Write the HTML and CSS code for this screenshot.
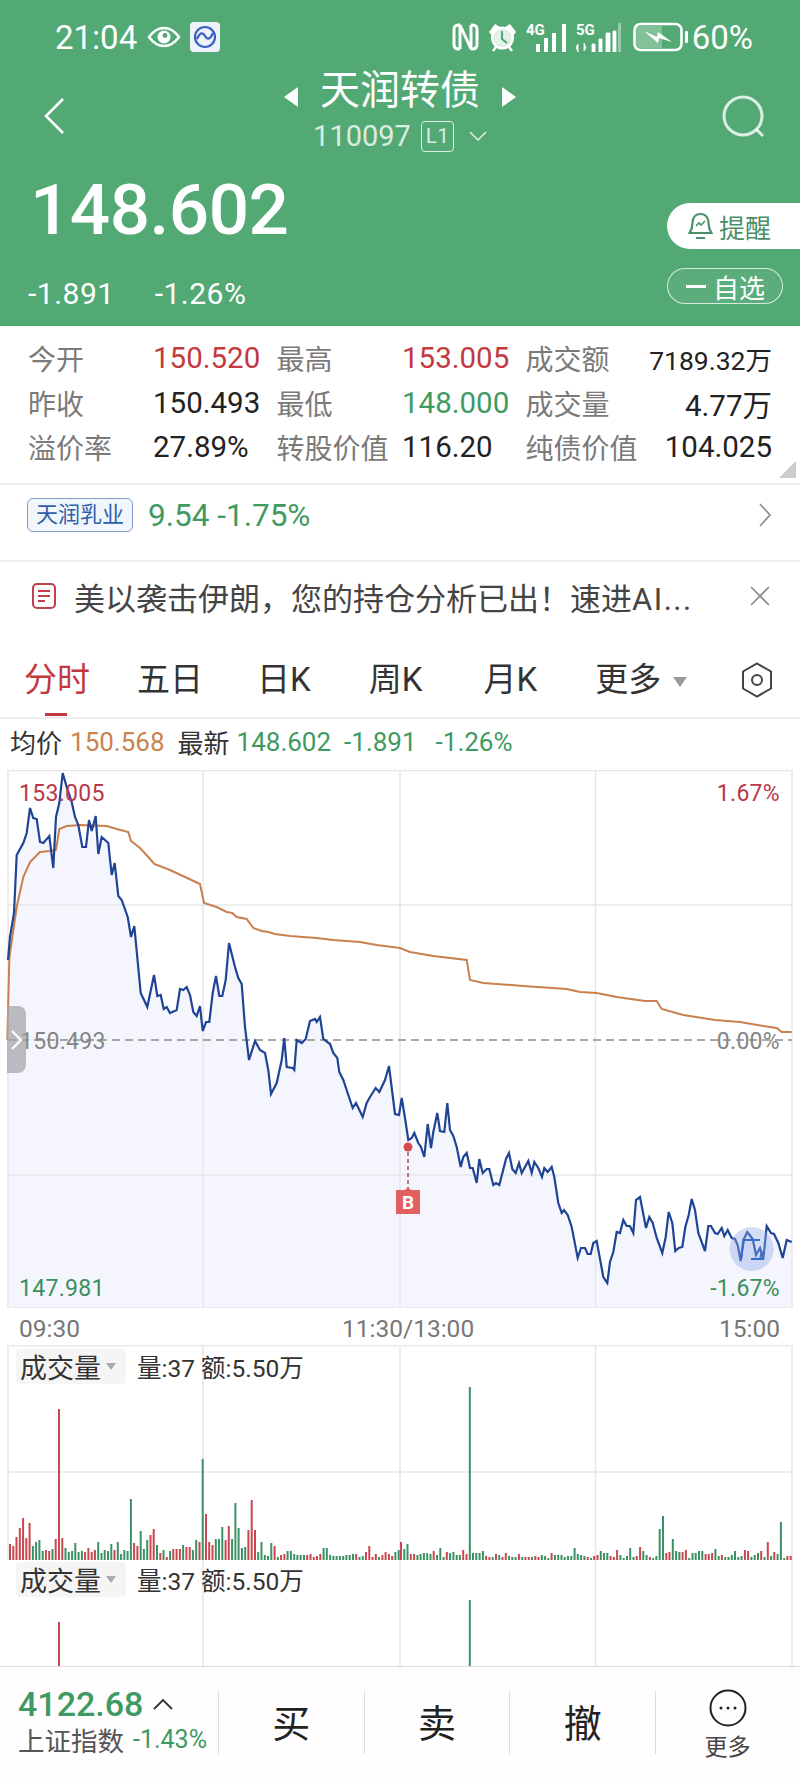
FILE: index.html
```html
<!DOCTYPE html>
<html lang="zh">

<head>
    <meta charset="utf-8">
    <title>天润转债</title>
    <link rel="stylesheet" href="styles.css">
</head>

<body>
    <header class="top">
        <div class="status">
            <span class="clock">21:04</span>
            <svg class="ic-eye" width="34" height="22" viewBox="0 0 34 22"><path d="M2 11C7 4 12 2 17 2s10 2 15 9c-5 7-10 9-15 9S7 18 2 11z" fill="none" stroke="#fff" stroke-width="2.500"/><circle cx="17" cy="11" r="6.500" fill="#fff"/><circle cx="18" cy="9.500" r="2.400" fill="#53a974"/></svg>
            <svg class="ic-app" width="30" height="30" viewBox="0 0 30 30"><rect width="30" height="30" rx="4" fill="#eef3fb"/><circle cx="15" cy="15" r="10" fill="none" stroke="#3a62bd" stroke-width="2.200"/><path d="M7 17c3-7 6-7 8-3s5 4 8-3" fill="none" stroke="#3a62bd" stroke-width="2.200"/></svg>
            <span class="status-gap"></span>
            <svg width="27" height="28" viewBox="0 0 27 28"><path d="M8 2H6.500Q2 2 2 6.500v15Q2 26 6.500 26H8M19 2h1.500Q25 2 25 6.500v15q0 4.500-4.500 4.500H19M8 26V2l11 24V2" fill="none" stroke="#fff" stroke-width="3"/></svg>
            <svg class="ic-alarm" width="29" height="30" viewBox="0 0 29 30"><path d="M1 10l6-8 5 3-8 9zM28 10l-6-8-5 3 8 9z" fill="#fff"/><circle cx="14.500" cy="16" r="10" fill="none" stroke="#fff" stroke-width="3"/><circle cx="14.500" cy="16" r="8.500" fill="rgba(255,255,255,.85)"/><path d="M14 9v8l5 4" fill="none" stroke="#53a974" stroke-width="2.200"/><path d="M5 29l3-4M24 29l-3-4" stroke="#fff" stroke-width="2.500"/></svg>
            <svg class="ic-sig" width="42" height="30" viewBox="0 0 42 30"><text x="0" y="13" class="sig-text">4G</text><path d="M10 30v-8h4v8zM18 30v-14h4v14zM26 30v-19h4v19zM36 30v-28h4v28z" fill="#fff"/></svg>
            <svg class="ic-sig5" width="46" height="30" viewBox="0 0 46 30"><text x="0" y="13" class="sig-text">5G</text><path d="M2 30v-8l-2 3zM8 21v8l2-3zM16 30v-8h3v8zM23 30v-13h3v13zM30 30v-19h4v19zM37 30V9h3v21z" fill="#fff" stroke="#fff" stroke-width=".8"/><path d="M42 30V1h3v29z" fill="#fff" opacity=".4"/></svg>
            <svg class="ic-batt" width="56" height="30" viewBox="0 0 56 30"><rect x="1.500" y="2" width="47" height="26" rx="6" fill="none" stroke="#fff" stroke-width="2.600"/><path d="M3 8q0-4 4-4h22v22H7q-4 0-4-4z" fill="rgba(255,255,255,.28)"/><path d="M11 9l13 6 1-5 14 10-13-4-1 5z" fill="#fff"/><rect x="52" y="9" width="3" height="12" rx="1" fill="#fff"/></svg>
            <span class="batt-num">60%</span>
        </div>

        <div class="nav">
            <svg class="nav-back" width="22" height="36" viewBox="0 0 22 36"><path d="M20 1L3 18l17 17" fill="none" stroke="#fff" stroke-width="2.600"/></svg>
            <div class="nav-mid">
                <div class="nav-title">
                    <i class="arrow-l"></i>
                    <span>天润转债</span>
                    <i class="arrow-r"></i>
                </div>
                <div class="nav-code">
                    <span>110097</span>
                    <span class="l1">L1</span>
                    <svg class="nav-chev" width="18" height="10" viewBox="0 0 18 10"><path d="M1 1l8 8 8-8" fill="none" stroke="rgba(255,255,255,.8)" stroke-width="1.500"/></svg>
                </div>
            </div>
            <svg class="nav-search" width="46" height="46" viewBox="0 0 46 46"><circle cx="22" cy="21" r="19" fill="none" stroke="rgba(255,255,255,.8)" stroke-width="3"/><path d="M35 34l7 7" stroke="rgba(255,255,255,.8)" stroke-width="3"/></svg>
        </div>

        <div class="quote">
            <div>
                <div class="price">148.602</div>
                <div class="change">
                    <span>-1.891</span>
                    <span>-1.26%</span>
                </div>
            </div>
            <div class="quote-btns">
                <div class="btn-remind">
                    <svg width="25" height="28" viewBox="0 0 25 28"><path d="M12.500 2C7 2 4.500 6 4.500 11c0 4-1 7-3 10h22c-2-3-3-6-3-10 0-5-2.500-9-8-9zM8 26h9" fill="none" stroke="#4a8f68" stroke-width="2.200"/><path d="M8 14l3-3 2 2 4-4" fill="none" stroke="#4a8f68" stroke-width="1.600"/></svg>
                    <span>提醒</span>
                </div>
                <div class="btn-fav"><span class="dash"></span>自选</div>
            </div>
        </div>
    </header>

    <section class="stats">
        <span class="lbl">今开</span><span class="red">150.520</span>
        <span class="lbl">最高</span><span class="red">153.005</span>
        <span class="lbl">成交额</span><span class="end small">7189.32万</span>
        <span class="lbl">昨收</span><span>150.493</span>
        <span class="lbl">最低</span><span class="green">148.000</span>
        <span class="lbl">成交量</span><span class="end">4.77万</span>
        <span class="lbl">溢价率</span><span>27.89%</span>
        <span class="lbl">转股价值</span><span>116.20</span>
        <span class="lbl">纯债价值</span><span class="end">104.025</span>
    </section>

    <section class="stock">
        <span class="stock-tag">天润乳业</span>
        <span class="stock-val">9.54 -1.75%</span>
        <svg width="14" height="24" viewBox="0 0 14 24"><path d="M2 1l10 11L2 23" fill="none" stroke="#888" stroke-width="1.600"/></svg>
    </section>

    <section class="notice">
        <svg width="24" height="26" viewBox="0 0 24 26"><rect x="1" y="1" width="22" height="24" rx="4" fill="none" stroke="#c0404a" stroke-width="2"/><path d="M6 8h12M6 13h12M6 18h7" stroke="#c0404a" stroke-width="2"/></svg>
        <span class="notice-text">美以袭击伊朗，您的持仓分析已出！速进<span class="notice-end">AI...</span></span>
        <svg width="20" height="20" viewBox="0 0 20 20"><path d="M1 1l18 18M19 1L1 19" stroke="#888" stroke-width="1.600"/></svg>
    </section>

    <nav class="tabs">
        <span class="tab on">分时</span>
        <span class="tab t2">五日</span>
        <span class="tab t3">日K</span>
        <span class="tab t4">周K</span>
        <span class="tab t5">月K</span>
        <span class="tab t6">更多<i class="tab-caret"></i></span>
        <svg class="tab-set" width="32" height="36" viewBox="0 0 32 36"><path d="M16 1.500l14 8v17l-14 8-14-8v-17z" fill="none" stroke="#444" stroke-width="2"/><circle cx="16" cy="18" r="5" fill="none" stroke="#444" stroke-width="2"/></svg>
    </nav>

    <div class="avg">
        <span>均价</span><span class="orange">150.568</span>
        <span class="a2">最新</span><span class="green a-p">148.602</span>
        <span class="green a-c">-1.891</span><span class="green a-r">-1.26%</span>
    </div>

    <div class="chart">
        <svg class="chart-svg" width="800" height="538" viewBox="0 770 800 538">
            <polygon class="area" points="8,1308 8,960 10,937 14,913 16.700,855 23.300,843 26.700,833 30,808 33.300,818 36.700,819 40,842 43.300,843 49.300,836 53.300,868 56,817 59.300,803 62.700,773 66.700,787 71.700,802 75,817 78.300,825 82.300,847 86,847 89,820 91.700,831 95.700,816 98.300,854 101.700,837 108.300,843 111.700,875 114.700,863 118.300,896 121.700,900 127.700,917 131,937 134.300,926 140.700,993 147.300,1007 154,975 157.300,996 160.700,995 163.700,1009 166.700,1007 170,1013 176.700,1010 180,989 183.300,990 186.700,987 190,995 193.300,1012 196.700,1016 200,1006 202.700,1031 206,1022 209.300,1022 212.700,993 216,976 219.300,996 222.300,996 225.700,980 229,943 235,967 238.300,978 241.700,984 245,1027 249,1060 255,1041 260,1050 265,1053 268.300,1070 271,1094 276.700,1083 281.700,1060 284.300,1038 286.700,1067 292.700,1068 294.300,1070 296.700,1040 301.700,1043 305.700,1039 310,1021 315,1019 316.700,1022 320,1017 323.300,1039 330,1044 333.300,1053 337.300,1058 339.300,1072 343.300,1080 352.700,1108 356,1103 362.700,1117 366.700,1103 370,1097 375.700,1088 379.300,1092 385,1080 389,1066 395,1114 399,1115 401.700,1098 405,1118 408.300,1140 411.700,1138 414.300,1133 418.300,1143 421,1147 424.300,1157 427.700,1124 431,1148 433.300,1132 437.300,1113 440,1131 444.300,1132 447.300,1103 450,1130 453.300,1136 456.700,1147 460.700,1167 463.300,1157 466.700,1153 470,1168 472.700,1168 476.700,1183 479.300,1159 482.700,1173 486.700,1169 489.300,1169 493.300,1185 496,1183 499.300,1185 506,1159 509,1153 512.300,1169 515.700,1173 519,1163 521.700,1173 528.300,1161 531.700,1173 534.300,1162 538.300,1168 542,1177 544.300,1168 547.700,1172 551.700,1167 554.300,1177 558.300,1203 561.700,1213 564,1210 567.700,1215 571.700,1227 577.700,1258 581,1248 585,1248 587.700,1254 590.700,1254 593.300,1243 596.700,1241 603.300,1277 607.300,1283 610,1262 613.300,1252 616.700,1232 620,1233 623.300,1220 626.700,1226 630,1226 633.300,1233 636,1200 640,1197 646,1228 649.300,1217 652.700,1223 656.700,1238 662.300,1253 665.700,1237 668.700,1212 672.300,1223 675.300,1251 678.700,1248 682.300,1247 685.300,1227 688.700,1215 691.700,1199 695,1210 698.300,1233 705,1251 708.300,1226 711,1226 715,1233 717.700,1234 721.700,1228 724.300,1236 727.700,1230 731.700,1238 735,1239 737.700,1245 740.700,1261 743.300,1240 747.300,1232 752.700,1239 756,1255 760,1248 763.300,1259 766.700,1226 771,1233 774,1234 778.300,1243 782.700,1258 786.700,1240 791.700,1242 791.700,1308"/>
            <path class="grid" d="M8 770.500H792V1308H8zM203 770V1308M400 770V1308M595.500 770V1308M8 905H792M8 1175H792"/>
            <path class="dash-line" d="M8 1040H792"/>
            <polyline class="line-avg" points="7.300,1040 9.300,960 10,953 16.700,907 23.300,877 30,862 40,852 50,851 56,850 59.300,829 66.700,826 80,825 106.700,826 116.700,829 128.300,832 131,841 140,848 148.300,857 154.300,864 170,870 185,877 200,884 204,903 216.700,907 226.700,912 232.300,913 236.700,917 246.700,919 253.300,928 261.700,931 268.300,932 275,934 290,936 316.700,938 333.300,940 360,942 376.700,945 400,948 410,952 433.300,956 466.700,960 470,980 483.300,983 523.300,986 566.700,989 580,992 596.700,993 616.700,997 645,1001 656.700,1001 661.700,1009 683.300,1015 715,1020 740,1022 763.300,1026 776.700,1028 781.700,1032 791.700,1032"/>
            <polyline class="line-price" points="8,960 10,937 14,913 16.700,855 23.300,843 26.700,833 30,808 33.300,818 36.700,819 40,842 43.300,843 49.300,836 53.300,868 56,817 59.300,803 62.700,773 66.700,787 71.700,802 75,817 78.300,825 82.300,847 86,847 89,820 91.700,831 95.700,816 98.300,854 101.700,837 108.300,843 111.700,875 114.700,863 118.300,896 121.700,900 127.700,917 131,937 134.300,926 140.700,993 147.300,1007 154,975 157.300,996 160.700,995 163.700,1009 166.700,1007 170,1013 176.700,1010 180,989 183.300,990 186.700,987 190,995 193.300,1012 196.700,1016 200,1006 202.700,1031 206,1022 209.300,1022 212.700,993 216,976 219.300,996 222.300,996 225.700,980 229,943 235,967 238.300,978 241.700,984 245,1027 249,1060 255,1041 260,1050 265,1053 268.300,1070 271,1094 276.700,1083 281.700,1060 284.300,1038 286.700,1067 292.700,1068 294.300,1070 296.700,1040 301.700,1043 305.700,1039 310,1021 315,1019 316.700,1022 320,1017 323.300,1039 330,1044 333.300,1053 337.300,1058 339.300,1072 343.300,1080 352.700,1108 356,1103 362.700,1117 366.700,1103 370,1097 375.700,1088 379.300,1092 385,1080 389,1066 395,1114 399,1115 401.700,1098 405,1118 408.300,1140 411.700,1138 414.300,1133 418.300,1143 421,1147 424.300,1157 427.700,1124 431,1148 433.300,1132 437.300,1113 440,1131 444.300,1132 447.300,1103 450,1130 453.300,1136 456.700,1147 460.700,1167 463.300,1157 466.700,1153 470,1168 472.700,1168 476.700,1183 479.300,1159 482.700,1173 486.700,1169 489.300,1169 493.300,1185 496,1183 499.300,1185 506,1159 509,1153 512.300,1169 515.700,1173 519,1163 521.700,1173 528.300,1161 531.700,1173 534.300,1162 538.300,1168 542,1177 544.300,1168 547.700,1172 551.700,1167 554.300,1177 558.300,1203 561.700,1213 564,1210 567.700,1215 571.700,1227 577.700,1258 581,1248 585,1248 587.700,1254 590.700,1254 593.300,1243 596.700,1241 603.300,1277 607.300,1283 610,1262 613.300,1252 616.700,1232 620,1233 623.300,1220 626.700,1226 630,1226 633.300,1233 636,1200 640,1197 646,1228 649.300,1217 652.700,1223 656.700,1238 662.300,1253 665.700,1237 668.700,1212 672.300,1223 675.300,1251 678.700,1248 682.300,1247 685.300,1227 688.700,1215 691.700,1199 695,1210 698.300,1233 705,1251 708.300,1226 711,1226 715,1233 717.700,1234 721.700,1228 724.300,1236 727.700,1230 731.700,1238 735,1239 737.700,1245 740.700,1261 743.300,1240 747.300,1232 752.700,1239 756,1255 760,1248 763.300,1259 766.700,1226 771,1233 774,1234 778.300,1243 782.700,1258 786.700,1240 791.700,1242"/>
            <circle class="pulse" cx="751.700" cy="1249" r="22"/>
            <path class="pulse-line" d="M741 1260l3-20h16M751 1259h13M760 1259l2-8"/>
            <text class="ax red-t" x="19" y="801">153.005</text>
            <text class="ax red-t" x="780" y="801" text-anchor="end">1.67%</text>
            <text class="ax gray-t" x="20" y="1049">150.493</text>
            <text class="ax gray-t" x="780" y="1049" text-anchor="end">0.00%</text>
            <text class="ax green-t" x="19" y="1296">147.981</text>
            <text class="ax green-t" x="780" y="1296" text-anchor="end">-1.67%</text>
            <circle class="b-dot" cx="408" cy="1147" r="4.500"/>
            <path class="b-stem" d="M408 1152V1188"/>
            <path class="b-flag" d="M396 1190h9l3-3 3 3h9v24h-24z"/>
            <text class="b-text" x="408" y="1209" text-anchor="middle">B</text>
        </svg>
        <div class="handle">
            <svg width="12" height="20" viewBox="0 0 12 20"><path d="M1 1l9 9-9 9" fill="none" stroke="#fff" stroke-width="2.200"/></svg>
        </div>
    </div>

    <div class="times">
        <span>09:30</span>
        <span class="time-mid">11:30/13:00</span>
        <span class="time-end">15:00</span>
    </div>

    <div class="vol vol-a">
        <svg class="vol-svg" width="800" height="215" viewBox="0 1345 800 215" data-base="1560">
            <path class="grid" d="M8 1345.500H792M8 1345V1560M203 1345V1560M400 1345V1560M595.500 1345V1560M792 1345V1560M8 1472H792"/>
            <path class="bars-r"/>
            <path class="bars-g"/>
        </svg>
        <div class="vol-head">
            <span class="chip">成交量<i class="chip-caret"></i></span>
            <span class="vol-info">量:37 额:5.50万</span>
        </div>
    </div>

    <div class="vol vol-b">
        <svg class="vol-svg" width="800" height="106" viewBox="0 1560 800 106" data-base="1773">
            <path class="grid" d="M203 1560V1666M400 1560V1666M595.500 1560V1666M792 1560V1666"/>
            <path class="bars-r"/>
            <path class="bars-g"/>
        </svg>
        <div class="vol-head">
            <span class="chip">成交量<i class="chip-caret"></i></span>
            <span class="vol-info">量:37 额:5.50万</span>
        </div>
    </div>

    <footer class="foot">
        <div class="index">
            <div class="index-top">
                <span class="index-num">4122.68</span>
                <svg width="20" height="12" viewBox="0 0 20 12"><path d="M1 11l9-9 9 9" fill="none" stroke="#333" stroke-width="1.800"/></svg>
            </div>
            <div class="index-bot">
                <span>上证指数</span>
                <span class="green index-pct">-1.43%</span>
            </div>
        </div>
        <div class="act">买</div>
        <div class="act">卖</div>
        <div class="act">撤</div>
        <div class="act act-more">
            <svg width="38" height="38" viewBox="0 0 38 38"><circle cx="19" cy="19" r="17.500" fill="none" stroke="#222" stroke-width="2"/><circle cx="12" cy="19" r="1.500" fill="#222"/><circle cx="19" cy="19" r="1.500" fill="#222"/><circle cx="26" cy="19" r="1.500" fill="#222"/></svg>
            <span>更多</span>
        </div>
    </footer>

    <script src="chart.js"></script>
</body>

</html>
```

FILE: styles.css
```css
* {
    margin: 0;
    box-sizing: border-box;
}

body {
    width: 800px;
    height: 1778px;
    overflow: hidden;
    background-color: white;
    color: #222;
    font-family: Roboto, "Noto Sans CJK SC", sans-serif;
}

i {
    display: inline-block;
}

/* header */
.top {
    height: 326px;
    padding-top: 20px;
    background-color: #53a974;
    color: white;
}

.status {
    display: flex;
    align-items: center;
    height: 34px;
    padding: 0 47px 0 55px;
}

.clock {
    font-size: 33px;
    width: 92px;
}

.ic-app {
    margin-left: 9px;
}

.status-gap {
    flex: 1;
}

.ic-alarm {
    margin-left: 9px;
}

.ic-sig {
    margin-left: 9px;
}

.ic-sig5 {
    margin-left: 8px;
}

.sig-text {
    font-size: 15px;
    font-weight: 700;
    fill: white;
}

.ic-batt {
    margin-left: 11px;
}

.batt-num {
    font-size: 33px;
    margin-left: 3px;
}

.nav {
    display: grid;
    grid-template-columns: 1fr auto 1fr;
    align-items: center;
    padding: 19px 33px 0;
}

.nav-search {
    justify-self: end;
    margin-top: 10px;
}

.nav-back {
    margin: 6px 0 0 10px;
}

.nav-title {
    display: flex;
    align-items: center;
    justify-content: center;
    gap: 22px;
    font-size: 40px;
    line-height: 36px;
}

.arrow-l {
    border-right: 14px solid white;
    border-top: 10px solid transparent;
    border-bottom: 10px solid transparent;
    margin-top: 12px;
}

.arrow-r {
    border-left: 14px solid white;
    border-top: 10px solid transparent;
    border-bottom: 10px solid transparent;
    margin-top: 12px;
}

.nav-code {
    display: flex;
    align-items: center;
    justify-content: center;
    gap: 10px;
    margin-top: 10px;
    height: 34px;
    font-size: 29px;
    color: rgba(255, 255, 255, 0.8);
}

.nav-chev {
    margin-left: 5px;
}

.l1 {
    border: 1.5px solid rgba(255, 255, 255, 0.8);
    border-radius: 4px;
    font-size: 21px;
    line-height: 29px;
    width: 33px;
    text-align: center;
}

.quote {
    display: flex;
    justify-content: space-between;
}

.price {
    font-size: 71px;
    font-weight: 500;
    letter-spacing: -0.5px;
    line-height: 54px;
    padding: 30px 0 0 30px;
    height: 84px;
}

.change {
    display: flex;
    gap: 40px;
    margin-top: 39px;
    padding-left: 28px;
    font-size: 30px;
    letter-spacing: 0.5px;
    line-height: 36px;
}

.quote-btns {
    display: flex;
    flex-direction: column;
    align-items: flex-end;
    width: 133px;
    padding-top: 50px;
}

.btn-remind {
    display: flex;
    align-items: center;
    gap: 6px;
    width: 133px;
    height: 46px;
    padding-left: 21px;
    background-color: white;
    border-radius: 23px 0 0 23px;
    color: #4a8f68;
    font-size: 26px;
}

.btn-fav {
    display: flex;
    align-items: center;
    width: 116px;
    height: 36px;
    margin: 19px 17px 0 0;
    padding-left: 18px;
    border: 1.5px solid rgba(255, 255, 255, 0.75);
    border-radius: 18px;
    background-color: rgba(255, 255, 255, 0.05);
    font-size: 26px;
}

.dash {
    width: 20px;
    height: 3px;
    margin-right: 7px;
    background-color: white;
}

/* stats */
.stats {
    position: relative;
    display: grid;
    grid-template-columns: 125px 123.5px 125.5px 123.5px 1fr auto;
    grid-auto-rows: 44.5px;
    align-items: center;
    height: 157px;
    padding: 10px 28px 0 28px;
    font-size: 29.5px;
    color: #222;
}

.stats::after {
    content: "";
    position: absolute;
    right: 4px;
    bottom: 5px;
    border-left: 17px solid transparent;
    border-bottom: 17px solid #ccc;
}

.lbl {
    font-size: 28px;
    color: #7a7a7a;
}

.end {
    text-align: right;
}

.small {
    font-size: 26.5px;
}

.red {
    color: #c23a3f;
}

.green {
    color: #3f9a62;
}

.orange {
    color: #c8834f;
}

/* stock + notice */
.stock {
    display: flex;
    align-items: center;
    height: 77px;
    padding: 0 28px 15px 27px;
    border-top: 2px solid #eee;
}

.stock-tag {
    width: 106px;
    height: 34px;
    border: 1px solid #7d9cc9;
    border-radius: 6px;
    background-color: #f1f6fc;
    color: #2f5fa8;
    font-size: 22px;
    line-height: 32px;
    text-align: center;
}

.stock-val {
    flex: 1;
    margin-left: 15px;
    color: #3f9a62;
    font-size: 31.5px;
}

.notice {
    display: flex;
    align-items: center;
    height: 72px;
    padding: 0 30px 2px 32px;
    border-top: 2px solid #eee;
}

.notice-text {
    flex: 1;
    margin-left: 18px;
    color: #444;
    font-size: 31px;
    white-space: nowrap;
}

.notice-end {
    letter-spacing: 1.5px;
}

/* tabs */
.tabs {
    position: relative;
    display: flex;
    align-items: center;
    height: 87px;
    padding: 11px 27px 0 24px;
    border-bottom: 2px solid #eee;
    font-size: 33px;
    color: #333;
}

.tab {
    line-height: 40px;
}

.tab.on {
    position: relative;
    color: #c23a3f;
}

.tab.on::after {
    content: "";
    position: absolute;
    left: 21px;
    bottom: -16px;
    width: 22px;
    height: 3px;
    background-color: #c23a3f;
}

.t2 {
    margin-left: 47px;
}

.t3 {
    margin-left: 54px;
}

.t4 {
    margin-left: 58px;
}

.t5 {
    margin-left: 61px;
}

.t6 {
    margin-left: 58px;
}

.tab-caret {
    margin-left: 12px;
    vertical-align: middle;
    border-top: 10px solid #999;
    border-left: 7px solid transparent;
    border-right: 7px solid transparent;
}

.tab-set {
    margin-left: auto;
}

/* avg row */
.avg {
    display: flex;
    align-items: center;
    height: 51px;
    padding: 0 0 6px 10px;
    font-size: 26px;
    color: #333;
}

.avg .orange {
    margin-left: 8px;
}

.avg .a2 {
    margin-left: 13px;
}

.avg .a-p {
    margin-left: 7px;
}

.avg .a-c {
    margin-left: 13px;
}

.avg .a-r {
    margin-left: 19px;
}

/* charts */
.chart {
    position: relative;
    height: 538px;
}

.chart-svg,
.vol-svg {
    display: block;
}

.area {
    fill: #f5f6fd;
}

.grid {
    fill: none;
    stroke: #e6e6ea;
    stroke-width: 1.5;
}

.dash-line {
    stroke: #8b8b8b;
    stroke-width: 1.5;
    stroke-dasharray: 8 5;
}

.line-avg {
    fill: none;
    stroke: #c97f4e;
    stroke-width: 2;
}

.line-price {
    fill: none;
    stroke: #1f4496;
    stroke-width: 2.2;
}

.pulse {
    fill: #8fabe8;
    opacity: 0.4;
}

.pulse-line {
    fill: none;
    stroke: #3a6bd0;
    stroke-width: 1.8;
}

.ax {
    font-size: 23px;
    letter-spacing: 0.3px;
}

.red-t {
    fill: #b8394a;
}

.gray-t {
    fill: #858585;
}

.green-t {
    fill: #3a8f5c;
}

.b-dot {
    fill: #d84a4a;
}

.b-stem {
    stroke: #a84a5e;
    stroke-width: 1.5;
    stroke-dasharray: 4 3;
}

.b-flag {
    fill: #e26060;
}

.b-text {
    fill: white;
    font-size: 19px;
    font-weight: 700;
}

.handle {
    position: absolute;
    left: 7px;
    top: 236px;
    display: flex;
    align-items: center;
    justify-content: center;
    width: 19px;
    height: 67px;
    background-color: rgba(165, 165, 172, 0.75);
    border-radius: 0 8px 8px 0;
}

.times {
    display: flex;
    align-items: center;
    height: 37px;
    padding: 3px 20px 0 19px;
    font-size: 24.5px;
    color: #777;
}

.time-mid {
    margin-left: 262px;
}

.time-end {
    margin-left: auto;
}

.vol {
    position: relative;
}

.vol-a {
    height: 215px;
}

.vol-b {
    height: 106px;
    overflow: hidden;
}

.bars-r,
.bars-g {
    fill: none;
    stroke-width: 2;
}

.bars-r {
    stroke: #c9474e;
}

.bars-g {
    stroke: #3c9164;
}

.vol-head {
    position: absolute;
    left: 16px;
    top: 4px;
    display: flex;
    align-items: center;
    gap: 11px;
}

.vol-b .vol-head {
    top: 2px;
}

.chip {
    display: flex;
    align-items: center;
    width: 110px;
    height: 35px;
    padding-left: 4px;
    background-color: #f6f5f5;
    border-radius: 4px;
    font-size: 27px;
    color: #333;
}

.chip-caret {
    margin-left: 5px;
    border-top: 7px solid #aaa;
    border-left: 5px solid transparent;
    border-right: 5px solid transparent;
}

.vol-info {
    font-size: 24.5px;
    color: #333;
}

/* footer */
.foot {
    display: flex;
    align-items: center;
    height: 112px;
    border-top: 1.5px solid #ddd;
    background-color: #fffdfe;
}

.index {
    width: 218px;
    padding-left: 18px;
}

.index-top {
    display: flex;
    align-items: center;
    gap: 10px;
    height: 36px;
}

.index-num {
    font-size: 34px;
    font-weight: 500;
    color: #3f9a62;
}

.index-bot {
    display: flex;
    align-items: center;
    font-size: 26.5px;
    color: #555;
    margin-top: -2px;
}

.index-pct {
    margin-left: 9px;
    font-size: 25px;
}

.act {
    display: flex;
    align-items: center;
    justify-content: center;
    width: 145.7px;
    height: 63px;
    padding-bottom: 4px;
    border-left: 1.5px solid #ddd;
    font-size: 38px;
    color: #222;
}

.act-more {
    flex-direction: column;
    justify-content: flex-start;
    gap: 8px;
    width: 144px;
    padding-bottom: 0;
}

.act-more svg {
    flex: none;
    margin-top: -2px;
}

.act-more span {
    font-size: 23px;
    line-height: 26px;
    color: #444;
}
```

FILE: chart.js
```js
// volume bars, read off the chart: r = red, g = green, number = height
var leftBars = 'r16 r14 r23 r32 r42 r22 r37 g14 g18 g20 g9 r10 r9 g11 r21 r151 r22 g12 g8 g9 g17 g8 g9 r8 r12 r8 r10 g18 g7 g10 g9 g16 r10 g18 g6 g10 g9 g61 r17 r14 g29 g11 g20 r25 r31 g15 r7 g10 r3 g9 r11 r11 r11 g15 r13 r13 g10 g20 r18 g101 r46 r18 r15 g21 g21 g33 r20 r34 g21 g57 g32 g12 g13 r30 r60 r30 g8 g18 g5 g4 g17 r14 g3 r5 r6 g9 g9 g6 g5 g5 g5 r5 r6 r3 r4 r6 g12 g12 g5 g4 g4 g4 g4 g5 g5 g6 r6 g3 g4 r8 r14 r3 r6 g3 r5 r8 r6 r4 g8 g10';
var rightBars = 'r18 g11 g16 r6 r6 g5 g6 g7 g7 g6 r9 g5 g12 g3 r8 g7 g8 g5 g5 r10 r6 g173 g7 g7 g7 g9 r4 r3 g3 r6 g5 r3 r7 g4 g3 g3 r6 g3 r3 r3 g3 r4 r3 g5 g4 g2 r7 g5 g5 g5 g3 g4 g4 g12 g6 g5 g4 r3 g2 r4 r5 g9 g7 g7 r4 r3 r10 g5 g2 g4 g12 g3 r4 r13 g9 g5 r3 g2 g4 g31 g44 r7 r8 g21 g9 g8 r8 r10 g2 g7 g7 g9 g9 r6 r6 r7 g11 g4 r5 g3 g3 g5 g9 g3 g4 r10 r9 g3 g5 g7 r9 g3 r18 g4 r8 g6 g38 g2 r4 r4';

function barPaths(list, from, to, base, out) {
    var bars = list.split(' ');
    var step = (to - from) / (bars.length - 1);
    for (var i = 0; i < bars.length; i++) {
        var x = (from + step * i).toFixed(1);
        out[bars[i][0]] += 'M' + x + ' ' + base + 'v-' + bars[i].slice(1);
    }
}

var panels = document.getElementsByClassName('vol-svg');
for (var p = 0; p < panels.length; p++) {
    var base = panels[p].getAttribute('data-base');
    var out = { r: '', g: '' };
    barPaths(leftBars, 10, 398.7, base, out);
    barPaths(rightBars, 401, 790.7, base, out);
    panels[p].querySelector('.bars-r').setAttribute('d', out.r);
    panels[p].querySelector('.bars-g').setAttribute('d', out.g);
}
```
